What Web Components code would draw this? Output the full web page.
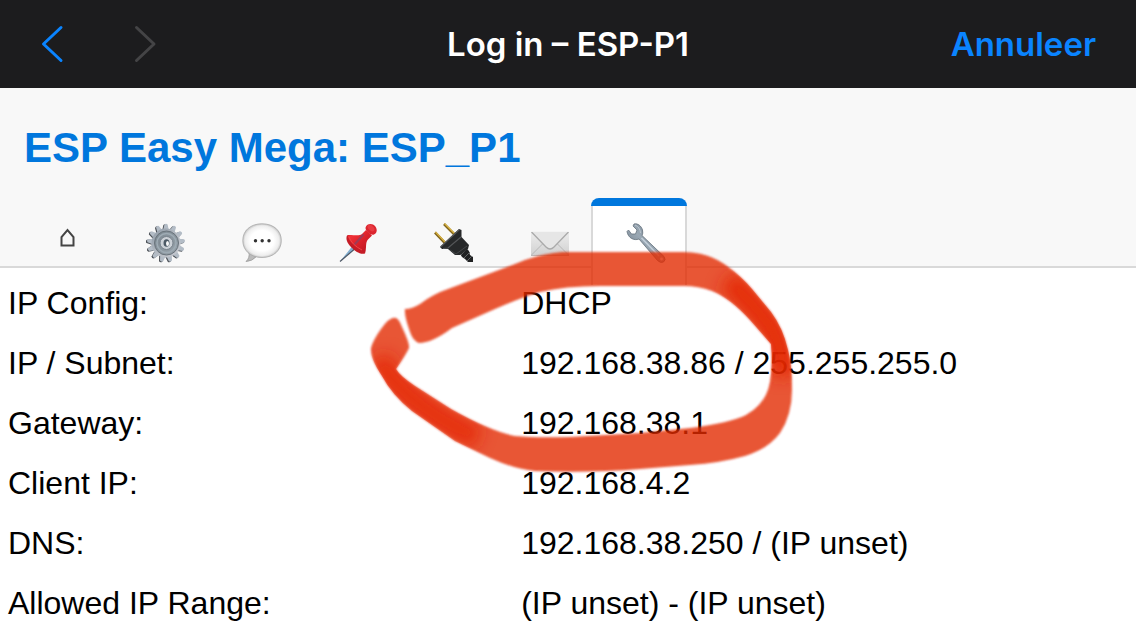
<!DOCTYPE html>
<html lang="nl">
<head>
<meta charset="utf-8">
<meta name="viewport" content="width=device-width, initial-scale=1">
<title>Log in – ESP-P1</title>
<style>
    body {
        margin: 0;
        background: #fff;
        color: #000;
        font-family: "Liberation Sans", Arial, sans-serif;
        font-size: 32px;
    }
</style>
</head>
<body>
<portal-page>
    <portal-bar slot="bar">Log in – ESP-P1</portal-bar>
    <esp-header slot="header" active="tools">ESP Easy Mega: ESP_P1</esp-header>
    <network-info></network-info>
    <marker-stroke slot="marker"></marker-stroke>
</portal-page>

<script>
const ICONS = {
    home: `<svg width="30" height="40" viewBox="0 0 30 40">
        <path d="M1.500 20.500V12L7.500 5L13.500 12V20.500Z" transform="translate(0 2)" fill="none" stroke="#444" stroke-width="2"/>
    </svg>`,

    config: `<svg width="40" height="40" viewBox="0 0 40 40">
        <defs>
            <linearGradient id="g1" x1="0" y1="0" x2="1" y2="1">
                <stop offset="0" stop-color="#8d99a5"/><stop offset=".5" stop-color="#b4bac2"/><stop offset="1" stop-color="#c9cbd2"/>
            </linearGradient>
            <linearGradient id="g2" x1="0" y1="0" x2="1" y2="1">
                <stop offset="0" stop-color="#7b8790"/><stop offset="1" stop-color="#9aa4ac"/>
            </linearGradient>
            <g id="teeth">${Array.from({ length: 13 }, (_, i) =>
                `<path d="M17.200 7L18.400 1.500Q20 0 21.600 1.500L22.800 7Z" transform="rotate(${i * 360 / 13} 20 20)"/>`).join('')}</g>
        </defs>
        <use href="#teeth" fill="#4a4f55" transform="translate(-1 .6)"/>
        <use href="#teeth" fill="#b3bcc6"/>
        <circle cx="20" cy="20" r="14.500" fill="url(#g1)"/>
        <circle cx="20.500" cy="20" r="12" fill="url(#g2)" stroke="#69737b"/>
        <circle cx="20.500" cy="20" r="9.500" fill="none" stroke="#9eabb4" stroke-width="1.500"/>
        <circle cx="20.500" cy="20" r="6.500" fill="#ccd1d7" stroke="#77818b"/>
        <ellipse cx="20.500" cy="20" rx="3" ry="3.800" fill="#4c5965"/>
        <ellipse cx="21.500" cy="20.500" rx="1.500" ry="2.500" fill="#f8f8f8"/>
    </svg>`,

    controllers: `<svg width="40" height="40" viewBox="0 0 40 40">
        <defs>
            <radialGradient id="b" cx=".5" cy=".5" r=".55">
                <stop offset=".55" stop-color="#fff"/><stop offset=".8" stop-color="#eee"/><stop offset="1" stop-color="#aaa"/>
            </radialGradient>
        </defs>
        <path d="M7 29Q8 35 4 38.500Q10 38.500 15 33Z" fill="#bbb" stroke="#999" stroke-width=".8"/>
        <path d="M20 .8C32 .8 39.300 8 39.300 17.500S32 34.500 20 34.500S.8 27 .8 17.500S8 .8 20 .8Z" fill="url(#b)" stroke="#aaa" stroke-width=".8"/>
        <g fill="#333"><circle cx="13.500" cy="17.700" r="1.700"/><circle cx="20.200" cy="17.700" r="1.700"/><circle cx="27" cy="17.700" r="1.700"/></g>
    </svg>`,

    hardware: `<svg width="40" height="40" viewBox="0 0 40 40">
        <defs>
            <linearGradient id="p" x1="0" y1="0" x2="1" y2="1">
                <stop offset="0" stop-color="#ff3c40"/><stop offset=".5" stop-color="#dd222b"/><stop offset="1" stop-color="#b51420"/>
            </linearGradient>
        </defs>
        <path d="M16 21L2 38.500L19 24Z" fill="#83afd0"/>
        <path d="M2 38.500L19 24" stroke="#4c5563" stroke-width="1.200"/>
        <path d="M9 12.500C12 11 17 13 21 17S29 25 27 30.500C22 32 17 28 13 24S7.500 16 9 12.500Z" fill="#c51c26"/>
        <path d="M10 12.500C16 11.500 21 13.500 24 11L28 7L34 12.500L30 16.500C27 19.500 29 25 27 28.500C22 28 10 19 10 12.500Z" fill="url(#p)"/>
        <path d="M28 3.500C30 0 35 .5 37 3S40 9.500 36 11.500C33 13 25.500 7 28 3.500Z" fill="#dc2630"/>
        <ellipse cx="33" cy="5" rx="4" ry="2.500" transform="rotate(42 33 5)" fill="#e83b42"/>
        <path d="M25 12L17 21" stroke="#9f3b56" stroke-width="2" stroke-linecap="round"/>
        <path d="M11 14Q14 22 24 27" fill="none" stroke="#f04448" stroke-width="1"/>
    </svg>`,

    devices: `<svg width="40" height="40" viewBox="0 0 40 40">
        <path d="M1 9.500L11 20M10 1L20 11" stroke="#82651d" stroke-width="2.600"/>
        <path d="M1.500 9L11.500 19.500M10.500 .5L20.500 10.500" stroke="#dbb544" stroke-width="1.200"/>
        <path d="M25 29L31 24L35 28L36 32L39 34V39H34L31 36L28 34Z" fill="#202122"/>
        <path d="M27 32L33 26M30 35L36 29M33 38L38 33" stroke="#626466" stroke-width="1"/>
        <path d="M6 24L25 6L27.500 7V14L35 22L34 26L26 32L21 32L14 26L8 26Z" fill="#27292a"/>
        <path d="M6.500 24L25.500 6.500M9 25.500L14 25L27 14" fill="none" stroke="#555759" stroke-width="1.200"/>
        <path d="M16 27L22 31L33 23" fill="none" stroke="#454749"/>
    </svg>`,

    notifications: `<svg width="40" height="40" viewBox="0 0 40 40">
        <defs>
            <linearGradient id="m" x1="0" y1="0" x2="0" y2="1">
                <stop offset="0" stop-color="#eee"/><stop offset="1" stop-color="#d0d0d0"/>
            </linearGradient>
        </defs>
        <path d="M1 8H39V33H1Z" fill="url(#m)"/>
        <path d="M1.500 32L13 20.500M38.500 32L27 20.500" stroke="#b8b8b8"/>
        <path d="M1.500 9L16 24Q20 28 24 24L38.500 9" fill="#e6e6e6" stroke="#aaa" stroke-width="1.300"/>
        <path d="M1 8.500H39" stroke="#f4f4f4"/>
        <path d="M1 32.500H39" stroke="#bbb"/>
    </svg>`,

    tools: `<svg width="40" height="40" viewBox="0 0 40 40">
        <defs>
            <linearGradient id="w" x1="0" y1="1" x2="1" y2="0">
                <stop offset="0" stop-color="#5f6c78"/><stop offset=".5" stop-color="#9aa8b4"/><stop offset="1" stop-color="#71818e"/>
            </linearGradient>
        </defs>
        <path d="M8 1C11.500 0 15.500 3 16.500 7Q17.300 10.500 16 12.500L38 33.500Q40.500 37 37.500 39Q34.500 40.500 31.500 37.500L13 16C8 18 2 15 1 8.500L2.500 7L5.500 11L9.500 11L11 7L7 3Z" fill="url(#w)" stroke="#63707b" stroke-width=".8"/>
        <path d="M15.500 15L33 33" stroke="#c4d0db" stroke-width="1.500"/>
        <path d="M9 2Q14 4 14.500 10" fill="none" stroke="#bac5ce"/>
        <circle cx="35.500" cy="36" r="1.400" fill="#e8ecef"/>
    </svg>`
};

class PortalPage extends HTMLElement {
    connectedCallback() {
        this.attachShadow({ mode: 'open' });
        this.shadowRoot.innerHTML = `
            <style>
                :host {
                    display: flex;
                    flex-direction: column;
                    position: relative;
                    overflow: hidden;
                    min-height: 100vh;
                }
            </style>
            <slot name="bar"></slot>
            <slot name="header"></slot>
            <main><slot></slot></main>
            <slot name="marker"></slot>
        `;
    }
}

class PortalBar extends HTMLElement {
    connectedCallback() {
        this.attachShadow({ mode: 'open' });
        this.shadowRoot.innerHTML = `
            <style>
                :host {
                    display: grid;
                    grid-template-columns: 1fr auto 1fr;
                    align-items: center;
                    height: 88px;
                    padding: 0 40px;
                    background: #1c1c1e;
                    color: #fff;
                    font-family: Inter, "Liberation Sans", sans-serif;
                    font-size: 33px;
                    font-weight: 600;
                }

                .history {
                    display: flex;
                    gap: 68px;
                }

                button {
                    display: flex;
                    padding: 0;
                    border: 0;
                    background: none;
                    color: #0a84ff;
                    font: inherit;
                    cursor: pointer;
                }

                button:disabled {
                    color: #444446;
                    cursor: default;
                }

                .cancel {
                    justify-self: end;
                }

                path {
                    fill: none;
                    stroke: currentColor;
                    stroke-width: 3;
                    stroke-linecap: round;
                    stroke-linejoin: round;
                }
            </style>

            <div class="history">
                <button aria-label="Vorige">
                    <svg width="25" height="40" viewBox="0 0 25 40"><path d="M21 3.500L3.500 20L21 36.500"/></svg>
                </button>
                <button aria-label="Volgende" disabled>
                    <svg width="25" height="40" viewBox="0 0 25 40"><path d="M3.500 3.500L21 20L3.500 36.500"/></svg>
                </button>
            </div>
            <slot></slot>
            <button class="cancel">Annuleer</button>
        `;
    }
}

class EspHeader extends HTMLElement {
    connectedCallback() {
        const active = this.getAttribute('active');
        const tabs = Object.keys(ICONS).map(name => `
            <a href="#${name}" aria-label="${name}" ${name === active ? 'class="active" aria-current="page"' : ''}>${ICONS[name]}</a>
        `).join('');

        this.attachShadow({ mode: 'open' });
        this.shadowRoot.innerHTML = `
            <style>
                :host {
                    display: block;
                    background: #f8f8f8;
                    border-bottom: 2px solid #d9d9d9;
                }

                h1 {
                    margin: 0;
                    padding: 36px 24px 26px;
                    color: #0077dd;
                    font-size: 42px;
                    line-height: 48px;
                }

                nav {
                    display: flex;
                    height: 68px;
                    padding-left: 25px;
                }

                a {
                    box-sizing: border-box;
                    height: 68px;
                    padding: 25px 19px 0 33px;
                    border: solid transparent;
                    border-width: 0 2px;
                    border-radius: 8px 8px 0 0;
                }

                /* the open tab hangs over the bottom line */
                a.active {
                    position: relative;
                    height: 87px;
                    overflow: hidden;
                    padding: 0;
                    border: 0;
                }

                a.active::before {
                    content: '';
                    display: block;
                    height: 8px;
                    background: #0077dd;
                }

                a.active svg {
                    box-sizing: border-box;
                    width: 96px;
                    height: 79px;
                    padding: 17px 19px 22px 33px;
                    border: solid #d9d9d9;
                    border-width: 0 2px;
                    background: #fff;
                }

                svg {
                    display: block;
                }
            </style>
            <h1><slot></slot></h1>
            <nav>${tabs}</nav>
        `;
    }
}

class NetworkInfo extends HTMLElement {
    connectedCallback() {
        const rows = [
            ['IP Config:', 'DHCP'],
            ['IP / Subnet:', '192.168.38.86 / 255.255.255.0'],
            ['Gateway:', '192.168.38.1'],
            ['Client IP:', '192.168.4.2'],
            ['DNS:', '192.168.38.250 / (IP unset)'],
            ['Allowed IP Range:', '(IP unset) - (IP unset)']
        ];

        this.attachShadow({ mode: 'open' });
        this.shadowRoot.innerHTML = `
            <style>
                :host {
                    display: block;
                    padding-top: 5px;
                }

                table {
                    position: relative;
                    width: 100%;
                    border-collapse: collapse;
                    table-layout: fixed;
                }

                th, td {
                    height: 60px;
                    padding: 0 8px;
                    font-weight: 400;
                    text-align: left;
                }

                th {
                    width: 45%;
                    box-sizing: border-box;
                }

                td {
                    padding-left: 10px;
                }
            </style>
            <table>
                <tbody>
                    ${rows.map(([label, value]) => `<tr><th scope="row">${label}</th><td>${value}</td></tr>`).join('')}
                </tbody>
            </table>
        `;
    }
}

class MarkerStroke extends HTMLElement {
    connectedCallback() {
        this.attachShadow({ mode: 'open' });
        this.shadowRoot.innerHTML = `
            <style>
                :host {
                    display: block;
                    position: absolute;
                    top: 240px;
                    left: 360px;
                    pointer-events: none;
                }

                svg {
                    display: block;
                }
            </style>
            <svg width="440" height="240" viewBox="360 240 440 240" aria-hidden="true">
                <defs>
                    <path id="ring" d="M405 309Q412 309 420 304Q433 294 448 289L515 264Q538 254 562 252H684Q708 252 727 266Q742 277 752 289L771 312Q783 328 788 350Q792 365 792 390Q792 415 780 433Q768 449 745 456Q720 463 690 465L640 469Q590 473 535 471Q514 469 490 458L455 441L412 411Q392 395 382 376Q370 358 371 348Q373 340 381 329Q390 316 396 318Q399 319 402 327Q410 344 409 348Q407 353 396 369Q400 376 415 386L451 409Q490 431 515 436Q535 438 570 437L640 433L690 428Q730 423 746 415Q766 404 770 382Q773 365 771 344Q765 337 750 320Q730 298 712 291Q698 286 684 286H600Q565 286 540 292Q520 298 495 309L452 328Q432 343 419 343Q413 341 410 332Q404 315 405 309Z"/>
                    <clipPath id="inside"><use href="#ring"/></clipPath>
                    <filter id="edge"><feGaussianBlur stdDeviation=".8"/></filter>
                    <filter id="soft" filterUnits="userSpaceOnUse" x="320" y="200" width="520" height="320"><feGaussianBlur stdDeviation="8"/></filter>
                </defs>
                <use href="#ring" fill="#e32a06" opacity=".79" filter="url(#edge)"/>
                <g clip-path="url(#inside)" fill="none" stroke="#e42400" stroke-width="24" filter="url(#soft)">
                    <path d="M728 280Q752 302 770 326Q782 346 784 376" opacity=".85"/>
                    <path d="M378 358Q392 385 425 408Q450 426 478 438" opacity=".75"/>
                </g>
            </svg>
        `;
    }
}

customElements.define('portal-page', PortalPage);
customElements.define('portal-bar', PortalBar);
customElements.define('esp-header', EspHeader);
customElements.define('network-info', NetworkInfo);
customElements.define('marker-stroke', MarkerStroke);
</script>
</body>
</html>
